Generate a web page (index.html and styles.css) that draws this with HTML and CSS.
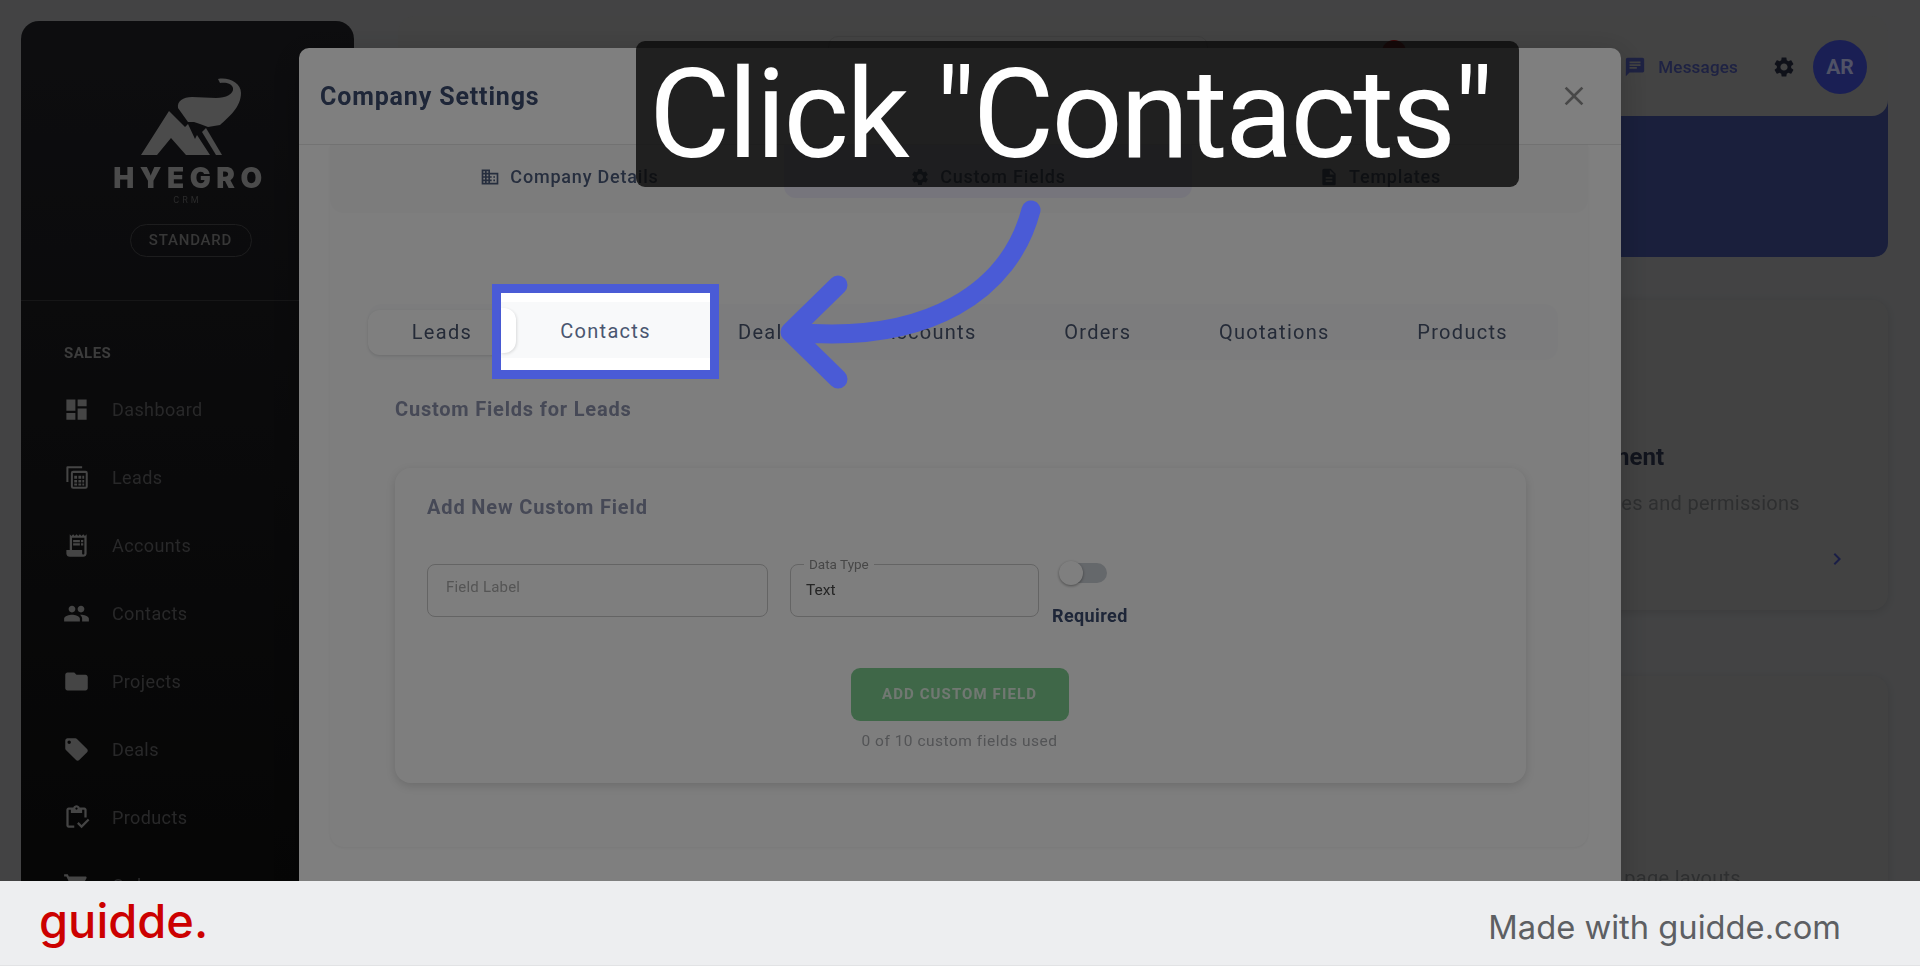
FILE: index.html
```html
<!DOCTYPE html>
<html lang="en">
<head>
<meta charset="utf-8">
<title>Company Settings</title>
<link rel="stylesheet" href="styles.css">
</head>
<body>
<div class="stage">
  <div class="app">
    <aside class="sidebar">
      <div class="brand">
        <svg class="brand-mark" viewBox="0 0 110 80" aria-hidden="true">
          <path d="M2 78 L30 34 L46 50 L49 47 L56 62 L58 58 L71 78 L47 78 L32 61 L18 78 Z"/>
          <path d="M39 31 C38 24 44 20 53 20 L77 21 C87 21 95 17 94 11 C93 6 86 5 81 6 L79 2 C90 0 102 6 102 16 C102 30 90 40 81 48 L69 50 L61 47 L55 45 L49 45 Z"/>
          <path d="M67 51 L83 78 L77 78 L63 55 Z"/>
        </svg>
        <div class="brand-name">HYEGRO</div>
        <div class="brand-sub">CRM</div>
        <div class="plan">STANDARD</div>
      </div>
      <div class="side-rule"></div>
      <div class="side-head">SALES</div>
      <nav class="side-nav">
        <a class="side-item"><svg viewBox="0 0 24 24"><path d="M3 13h8V3H3v10zm0 8h8v-6H3v6zm10 0h8V11h-8v10zm0-18v6h8V3h-8z"/></svg>Dashboard</a>
        <a class="side-item"><svg viewBox="0 0 24 24"><path d="M4 2h13v1.800H4.800V16H3V3a1 1 0 0 1 1-1z"/><path fill-rule="evenodd" d="M9 6h11a2 2 0 0 1 2 2v12a2 2 0 0 1-2 2H9a2 2 0 0 1-2-2V8a2 2 0 0 1 2-2zm-.200 2v12.200h11.400V8H8.800z"/><path d="M10 10.500h2.500v2.500H10zm3.700 0h2.500v2.500h-2.500zm3.500 0h1.600v2.500h-1.600zM10 14.200h2.500v2.200H10zm3.700 0h2.500v2.200h-2.500zm3.500 0h1.600v2.200h-1.600zM10 17.400h2.500v1.600H10zm3.700 0h2.500v1.600h-2.500zm3.500 0h1.600v1.600h-1.600z"/></svg>Leads</a>
        <a class="side-item"><svg viewBox="0 0 24 24"><path d="M19.500 3.500 18 2l-1.500 1.500L15 2l-1.500 1.500L12 2l-1.500 1.500L9 2 7.500 3.500 6 2v14H3v3c0 1.660 1.340 3 3 3h12c1.660 0 3-1.340 3-3V2l-1.500 1.500zM19 19c0 .55-.45 1-1 1s-1-.45-1-1v-3H8V5h11v14z"/><path d="M9 7h6v2H9zm7 0h2v2h-2zm-7 3h6v2H9zm7 0h2v2h-2z"/></svg>Accounts</a>
        <a class="side-item"><svg viewBox="0 0 24 24"><path d="M16 11c1.660 0 2.990-1.340 2.990-3S17.660 5 16 5c-1.660 0-3 1.340-3 3s1.340 3 3 3zm-8 0c1.660 0 2.990-1.340 2.990-3S9.660 5 8 5C6.340 5 5 6.340 5 8s1.340 3 3 3zm0 2c-2.330 0-7 1.170-7 3.500V19h14v-2.500c0-2.330-4.670-3.500-7-3.500zm8 0c-.29 0-.62.02-.97.05 1.160.84 1.970 1.970 1.970 3.450V19h6v-2.500c0-2.330-4.670-3.500-7-3.500z"/></svg>Contacts</a>
        <a class="side-item"><svg viewBox="0 0 24 24"><path d="M10 4H4c-1.100 0-1.990.9-1.990 2L2 18c0 1.100.9 2 2 2h16c1.100 0 2-.9 2-2V8c0-1.100-.9-2-2-2h-8l-2-2z"/></svg>Projects</a>
        <a class="side-item"><svg viewBox="0 0 24 24"><path d="M21.410 11.580l-9-9C12.050 2.220 11.550 2 11 2H4c-1.100 0-2 .9-2 2v7c0 .55.22 1.050.59 1.420l9 9c.36.36.86.58 1.410.58.55 0 1.050-.22 1.410-.59l7-7c.37-.36.59-.86.59-1.410 0-.55-.23-1.060-.59-1.420zM5.500 7C4.670 7 4 6.330 4 5.500S4.670 4 5.500 4 7 4.670 7 5.500 6.330 7 5.500 7z"/></svg>Deals</a>
        <a class="side-item"><svg viewBox="0 0 24 24"><path d="M19 3h-4.180C14.400 1.840 13.300 1 12 1s-2.400.84-2.820 2H5c-1.100 0-2 .9-2 2v14c0 1.100.9 2 2 2h5v-2H5V5h2v3h10V5h2v7h2V5c0-1.100-.9-2-2-2zm-7 2c-.55 0-1-.45-1-1s.45-1 1-1 1 .45 1 1-.45 1-1 1z"/><path d="M12.500 17.500l1.400-1.400 2.600 2.600 5.600-5.600 1.400 1.400-7 7z"/></svg>Products</a>
        <a class="side-item"><svg viewBox="0 0 24 24"><path d="M7 18c-1.100 0-1.990.9-1.990 2S5.900 22 7 22s2-.9 2-2-.9-2-2-2zM1 2v2h2l3.600 7.590-1.350 2.450c-.16.28-.25.61-.25.96 0 1.100.9 2 2 2h12v-2H7.420c-.14 0-.25-.11-.25-.25l.03-.12.9-1.630h7.450c.75 0 1.410-.41 1.750-1.030l3.580-6.490c.08-.14.12-.31.12-.48 0-.55-.45-1-1-1H5.210l-.94-2H1zm16 16c-1.100 0-1.990.9-1.990 2s.89 2 1.990 2 2-.9 2-2-.9-2-2-2z"/></svg>Orders</a>
      </nav>
    </aside>

    <main class="main">
      <header class="topbar">
        <div class="search"></div>
        <span class="bell-dot"></span>
        <a class="msg"><svg viewBox="0 0 24 24"><path d="M20 2H4c-1.100 0-1.990.9-1.990 2L2 22l4-4h14c1.100 0 2-.9 2-2V4c0-1.100-.9-2-2-2zM6 9h12v2H6V9zm8 5H6v-2h8v2zm4-6H6V6h12v2z"/></svg>Messages</a>
        <svg class="gear" viewBox="0 0 24 24"><path d="M19.140 12.940c.04-.3.06-.61.06-.94 0-.32-.02-.64-.07-.94l2.030-1.580c.18-.14.23-.41.12-.61l-1.920-3.320c-.12-.22-.37-.29-.59-.22l-2.390.96c-.5-.38-1.030-.7-1.620-.94l-.36-2.540c-.04-.24-.24-.41-.48-.41h-3.840c-.24 0-.43.17-.47.41l-.36 2.540c-.59.24-1.130.57-1.620.94l-2.390-.96c-.22-.08-.47 0-.59.22L2.740 8.870c-.12.21-.08.47.12.61l2.030 1.580c-.05.3-.09.63-.09.94s.02.64.07.94l-2.030 1.580c-.18.14-.23.41-.12.61l1.920 3.320c.12.22.37.29.59.22l2.390-.96c.5.38 1.030.7 1.620.94l.36 2.540c.05.24.24.41.48.41h3.840c.24 0 .44-.17.47-.41l.36-2.540c.59-.24 1.130-.56 1.620-.94l2.390.96c.22.08.47 0 .59-.22l1.920-3.320c.12-.22.07-.47-.12-.61l-2.010-1.580zM12 15.600c-1.980 0-3.600-1.620-3.600-3.600s1.620-3.600 3.600-3.600 3.600 1.620 3.600 3.600-1.620 3.600-3.600 3.600z"/></svg>
        <div class="avatar">AR</div>
      </header>
      <section class="hero"></section>
      <section class="card card-users">
        <h3>User Management</h3>
        <p>Manage user roles and permissions</p>
        <svg class="chev" viewBox="0 0 24 24"><path d="M8.590 16.590 13.170 12 8.590 7.410 10 6l6 6-6 6z"/></svg>
      </section>
      <section class="card card-layouts">
        <p>Customize your page layouts</p>
      </section>
    </main>
  </div>

  <div class="modal">
    <header class="modal-head">
      <h2>Company Settings</h2>
      <svg class="close" viewBox="0 0 24 24"><path d="M19 6.410 17.590 5 12 10.590 6.410 5 5 6.410 10.590 12 5 17.590 6.410 19 12 13.410 17.590 19 19 17.590 13.410 12z"/></svg>
    </header>
    <div class="modal-panel">
      <div class="section-tabs">
        <div class="section-tab"><svg viewBox="0 0 24 24"><path d="M12 7V3H2v18h20V7H12zM6 19H4v-2h2v2zm0-4H4v-2h2v2zm0-4H4V9h2v2zm0-4H4V5h2v2zm4 12H8v-2h2v2zm0-4H8v-2h2v2zm0-4H8V9h2v2zm0-4H8V5h2v2zm10 12h-8v-2h2v-2h-2v-2h2v-2h-2V9h8v10zm-2-8h-2v2h2v-2zm0 4h-2v2h2v-2z"/></svg>Company Details</div>
        <div class="section-tab is-current"><svg viewBox="0 0 24 24"><path d="M19.140 12.940c.04-.3.06-.61.06-.94 0-.32-.02-.64-.07-.94l2.030-1.580c.18-.14.23-.41.12-.61l-1.920-3.320c-.12-.22-.37-.29-.59-.22l-2.390.96c-.5-.38-1.030-.7-1.620-.94l-.36-2.540c-.04-.24-.24-.41-.48-.41h-3.840c-.24 0-.43.17-.47.41l-.36 2.540c-.59.24-1.130.57-1.620.94l-2.390-.96c-.22-.08-.47 0-.59.22L2.740 8.870c-.12.21-.08.47.12.61l2.030 1.580c-.05.3-.09.63-.09.94s.02.64.07.94l-2.030 1.580c-.18.14-.23.41-.12.61l1.920 3.320c.12.22.37.29.59.22l2.390-.96c.5.38 1.030.7 1.620.94l.36 2.540c.05.24.24.41.48.41h3.840c.24 0 .44-.17.47-.41l.36-2.540c.59-.24 1.130-.56 1.620-.94l2.390.96c.22.08.47 0 .59-.22l1.920-3.320c.12-.22.07-.47-.12-.61l-2.010-1.580zM12 15.600c-1.980 0-3.600-1.620-3.600-3.600s1.620-3.600 3.600-3.600 3.600 1.620 3.600 3.600-1.620 3.600-3.600 3.600z"/></svg>Custom Fields</div>
        <div class="section-tab"><svg viewBox="0 0 24 24"><path d="M14 2H6c-1.100 0-1.990.9-1.990 2L4 20c0 1.100.89 2 1.990 2H18c1.100 0 2-.9 2-2V8l-6-6zm2 16H8v-2h8v2zm0-4H8v-2h8v2zm-3-5V3.500L18.500 9H13z"/></svg>Templates</div>
      </div>
      <div class="entity-tabs">
        <div class="entity-tab is-current">Leads</div>
        <div class="entity-tab">Contacts</div>
        <div class="entity-tab">Deals</div>
        <div class="entity-tab">Accounts</div>
        <div class="entity-tab">Orders</div>
        <div class="entity-tab">Quotations</div>
        <div class="entity-tab">Products</div>
      </div>
      <h3 class="fields-title">Custom Fields for Leads</h3>
      <div class="field-card">
        <h4>Add New Custom Field</h4>
        <div class="field-row">
          <div class="input input-label"><span class="placeholder">Field Label</span></div>
          <div class="input input-type"><span class="legend">Data Type</span><span class="value">Text</span></div>
          <div class="required">
            <span class="toggle"><span class="thumb"></span></span>
            <span class="required-text">Required</span>
          </div>
        </div>
        <div class="field-actions">
          <div class="add-btn">ADD CUSTOM FIELD</div>
          <div class="usage">0 of 10 custom fields used</div>
        </div>
      </div>
    </div>
  </div>

  <div class="dim"></div>

  <div class="spot">
    <div class="spot-strip">
      <span class="spot-pill"></span>
      <span class="spot-text">Contacts</span>
    </div>
  </div>

  <svg class="arrow" viewBox="0 0 300 210" aria-hidden="true">
    <path d="M271 20 C250 100 170 155 32 142 M78 95 L30 142 L78 189"/>
  </svg>

  <div class="caption">Click "Contacts"</div>
</div>

<footer class="footer">
  <span class="logo">guidde.</span>
  <span class="made">Made with guidde.com</span>
</footer>
</body>
</html>
```

FILE: styles.css
```css
* { box-sizing: border-box; }
html, body { margin: 0; padding: 0; }
body {
  width: 1920px;
  height: 966px;
  overflow: hidden;
  font-family: Roboto, "Liberation Sans", sans-serif;
  background: #edeef0;
}
h2, h3, h4, p { margin: 0; }

.stage {
  position: relative;
  height: 881px;
  overflow: hidden;
}

/* page underneath the dialog */
.app {
  display: flex;
  height: 881px;
  background: #868789;
  filter: blur(.5px);
}
.sidebar {
  flex: 0 0 333px;
  margin: 21px 0 0 21px;
  border-radius: 18px 18px 0 0;
  background: linear-gradient(180deg, #1b1b1f 0%, #0c0c0c 100%);
  display: flex;
  flex-direction: column;
}
.brand {
  flex: none;
  display: flex;
  flex-direction: column;
  align-items: center;
  padding-top: 56px;
  height: 279px;
}
.brand-mark { flex: none; width: 110px; height: 80px; fill: #969696; margin-left: 13px; }
.brand-name {
  margin-top: 7px;
  font: 900 28px/28px Inter, "Liberation Sans", sans-serif;
  letter-spacing: 5.5px;
  margin-right: -6px;
  color: #969696;
}
.brand-sub { font-size: 9px; line-height: 10px; letter-spacing: 3px; color: #555; margin-top: 3px; }
.plan {
  margin-top: 19px;
  width: 122px;
  height: 33px;
  margin-left: 6px;
  border: 1px solid #3a3a3c;
  border-radius: 17px;
  font-size: 15px;
  font-weight: 500;
  line-height: 31px;
  letter-spacing: .8px;
  text-align: center;
  color: #6e6e6e;
}
.side-rule { flex: none; height: 1px; background: #2c2c2e; }
.side-head {
  flex: none;
  margin: 43px 0 0 43px;
  font-size: 15px;
  line-height: 18px;
  font-weight: 700;
  letter-spacing: .4px;
  color: #787878;
}
.side-nav { flex: none; margin-top: 13px; display: flex; flex-direction: column; }
.side-item {
  display: flex;
  align-items: center;
  height: 68px;
  padding-left: 42px;
  font-size: 18px;
  letter-spacing: .4px;
  color: #505052;
}
.side-item svg { width: 27px; height: 27px; margin-right: 22px; fill: #8a8a8a; flex: none; }

.main {
  flex: 1;
  min-width: 0;
  margin-left: 44px;
  margin-right: 32px;
  padding-top: 16px;
  display: flex;
  flex-direction: column;
}
.topbar {
  position: relative;
  z-index: 1;
  flex: 0 0 100px;
  display: flex;
  align-items: center;
  justify-content: flex-end;
  padding: 1px 21px 0 0;
  border-radius: 16px;
  background: #868686;
}
.search {
  position: absolute;
  left: 430px;
  top: 20px;
  width: 380px;
  height: 44px;
  border: 1px solid #7a7a7a;
  border-radius: 10px;
}
.bell-dot {
  position: absolute;
  left: 984px;
  top: 24px;
  width: 24px;
  height: 24px;
  border-radius: 50%;
  background: #7d0f0f;
}
.msg {
  display: flex;
  align-items: center;
  gap: 12px;
  font-size: 17px;
  font-weight: 500;
  letter-spacing: .2px;
  color: #3c4486;
}
.msg svg { width: 22px; height: 22px; fill: #3c4486; }
.gear { width: 24px; height: 24px; margin-left: 34px; fill: #1f2333; }
.avatar {
  width: 54px;
  height: 54px;
  margin-left: 17px;
  border-radius: 50%;
  background: #343fa8;
  color: #a0a5cc;
  font-size: 21px;
  font-weight: 700;
  line-height: 54px;
  text-align: center;
}
.hero {
  flex: 0 0 157px;
  margin-top: -16px;
  border-radius: 0 0 14px 14px;
  background: #343f78;
}
.card {
  position: relative;
  flex: none;
  border-radius: 16px;
  background: #858585;
  box-shadow: 0 2px 8px rgba(0,0,0,.12);
  text-align: right;
}
.card-users { height: 310px; margin-top: 43px; padding: 143px 224px 0 0; }
.card-users h3 { font-size: 24px; line-height: 28px; font-weight: 700; color: #22283a; }
.card-users p { margin-top: 20px; margin-right: -136px; font-size: 20px; line-height: 24px; letter-spacing: .3px; color: #5c5e60; }
.chev { position: absolute; right: 39px; top: 247px; width: 24px; height: 24px; fill: #343c8c; }
.card-layouts { height: 300px; margin-top: 66px; padding: 190px 147px 0 0; }
.card-layouts p { font-size: 20px; line-height: 24px; letter-spacing: .3px; color: #5c5e60; }

/* dialog */
.modal {
  position: absolute;
  left: 299px;
  top: 48px;
  width: 1322px;
  height: 860px;
  border-radius: 10px 10px 0 0;
  background: #fff;
  filter: blur(.5px);
  box-shadow: 0 8px 30px rgba(0,0,0,.2);
}
.modal-head {
  height: 97px;
  border-bottom: 1px solid #e6e6e6;
  padding: 0 31px 0 21px;
  display: flex;
  align-items: center;
  justify-content: space-between;
}
.modal-head h2 { font-size: 25px; font-weight: 700; letter-spacing: .85px; color: #3c4c70; }
.close { width: 32px; height: 32px; fill: #909090; }
.modal-panel {
  margin: 0 33px 0 31px;
  height: 702px;
  border-radius: 0 0 14px 14px;
  background: #fcfcfc;
  box-shadow: 0 1px 3px rgba(0,0,0,.06);
  display: flex;
  flex-direction: column;
}
.section-tabs {
  flex: none;
  height: 68px;
  display: grid;
  grid-template-columns: 429px 408px 376px;
  padding: 0 0 0 25px;
  background: #f8f8f9;
  border-radius: 0 0 14px 14px;
}
.section-tab {
  height: 53px;
  padding-top: 10px;
  display: flex;
  align-items: center;
  justify-content: center;
  gap: 10px;
  font-size: 18px;
  font-weight: 500;
  letter-spacing: .8px;
  color: #4d5c7c;
}
.section-tab svg { width: 20px; height: 20px; fill: #4d5c7c; }
.section-tab.is-current {
  border-radius: 0 0 12px 12px;
  background: #ecebf8;
}
.entity-tabs {
  flex: none;
  margin: 91px 30px 0 38px;
  height: 56px;
  display: flex;
  align-items: center;
  background: #f8f9fa;
  border-radius: 14px;
}
.entity-tab {
  padding: 0 43.800px;
  height: 45px;
  display: flex;
  align-items: center;
  font-size: 20px;
  letter-spacing: 1.300px;
  color: #4a5670;
}
.entity-tab.is-current {
  background: #fff;
  border-radius: 12px;
  box-shadow: 0 1px 3px rgba(0,0,0,.12);
}
.fields-title {
  flex: none;
  margin: 36px 0 0 65px;
  font-size: 20px;
  line-height: 26px;
  font-weight: 700;
  letter-spacing: .8px;
  color: #8d92ad;
}
.field-card {
  flex: none;
  margin: 46px 62px 0 65px;
  height: 315px;
  padding: 26px 32px 0;
  border-radius: 16px;
  background: #fdfdfd;
  box-shadow: 0 3px 10px rgba(0,0,0,.14);
}
.field-card h4 { font-size: 20px; line-height: 26px; font-weight: 700; letter-spacing: .85px; color: #8d92ad; }
.field-row {
  margin-top: 44px;
  display: flex;
  align-items: flex-start;
}
.input {
  position: relative;
  height: 53px;
  border: 1px solid #c8c8c8;
  border-radius: 8px;
}
.input-label { width: 341px; }
.input-type { width: 249px; margin-left: 22px; }
.placeholder {
  position: absolute;
  left: 18px;
  top: 12px;
  font-size: 15px;
  line-height: 20px;
  letter-spacing: .2px;
  color: #aaa;
}
.legend {
  position: absolute;
  left: 13px;
  top: -9px;
  padding: 0 5px;
  background: #fdfdfd;
  font-size: 13.500px;
  line-height: 16px;
  color: #8e8e8e;
}
.value {
  position: absolute;
  left: 15px;
  top: 14px;
  font-size: 15.500px;
  line-height: 22px;
  color: #4a4a4a;
}
.required {
  margin: -1px 0 0 13px;
  display: flex;
  flex-direction: column;
  align-items: flex-start;
}
.toggle {
  position: relative;
  display: block;
  width: 46px;
  height: 20px;
  margin-left: 9px;
  border-radius: 10px;
  background: #cbd0d6;
}
.thumb {
  position: absolute;
  left: -2px;
  top: -2px;
  width: 24px;
  height: 24px;
  border-radius: 50%;
  background: #fff;
  box-shadow: 0 1px 3px rgba(0,0,0,.4);
}
.required-text {
  margin-top: 22px;
  font-size: 18px;
  line-height: 22px;
  font-weight: 700;
  letter-spacing: .4px;
  color: #3c4c70;
}
.field-actions {
  margin-top: 41px;
  padding-right: 2px;
  display: flex;
  flex-direction: column;
  align-items: center;
}
.add-btn {
  width: 218px;
  height: 53px;
  border-radius: 9px;
  background: #7fcf91;
  color: #e3f0e5;
  font-size: 15px;
  font-weight: 700;
  letter-spacing: 1.100px;
  line-height: 53px;
  text-align: center;
}
.usage {
  margin-top: 10px;
  font-size: 15.500px;
  line-height: 20px;
  letter-spacing: .5px;
  color: #a6a8ac;
}

/* tutorial layer */
.dim {
  position: absolute;
  inset: 0;
  background: rgba(0,0,0,.5);
}
.spot {
  position: absolute;
  left: 492px;
  top: 284px;
  width: 227px;
  height: 95px;
  border: 9.500px solid #4a5bd6;
  padding-top: 9px;
  background: #fff;
}
.spot-strip {
  position: relative;
  height: 56px;
  background: #f8f9fa;
  display: flex;
  align-items: center;
  justify-content: center;
}
.spot-pill {
  position: absolute;
  left: 0;
  top: 6px;
  width: 15px;
  height: 45px;
  border-radius: 0 12px 12px 0;
  background: #fff;
  box-shadow: 1px 1px 3px rgba(0,0,0,.12);
}
.spot-text {
  margin-top: 2px;
  font-size: 20px;
  letter-spacing: 1.300px;
  color: #4a5670;
}
.arrow {
  position: absolute;
  left: 760px;
  top: 190px;
  width: 300px;
  height: 210px;
  fill: none;
  stroke: #4a5bd6;
  stroke-width: 19px;
  stroke-linecap: round;
  stroke-linejoin: round;
}
.caption {
  position: absolute;
  left: 636px;
  top: 41px;
  width: 883px;
  height: 146px;
  padding-right: 15px;
  border-radius: 9px;
  background: rgba(9,9,9,.8);
  color: #fff;
  font-size: 125px;
  font-weight: 400;
  letter-spacing: -2.600px;
  line-height: 148px;
  text-align: center;
  white-space: nowrap;
}

/* footer */
.footer {
  height: 85px;
  display: flex;
  align-items: center;
  justify-content: space-between;
  padding: 0 79px 0 39px;
  background: #edeef0;
  border-bottom: 1px solid #e2e3e5;
}
.logo {
  margin-bottom: 5px;
  font: 500 47px/1 Inter, "Liberation Sans", sans-serif;
  color: #cc0000;
}
.made { margin-top: 8px; font: 400 32.700px/1 Inter, Roboto, sans-serif; color: #5d5f63; }
```
